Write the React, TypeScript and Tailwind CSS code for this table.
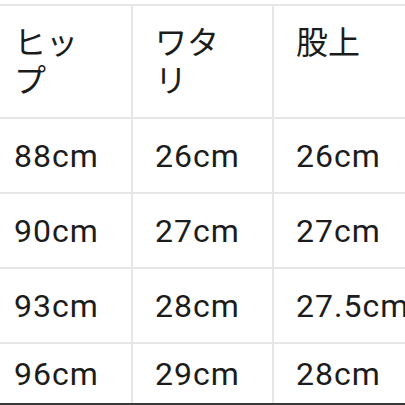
import React from "react";

const rows = [
  ["88cm", "26cm", "26cm"],
  ["90cm", "27cm", "27cm"],
  ["93cm", "28cm", "27.5cm"],
  ["96cm", "29cm", "28cm"],
];

const headers = ["ヒップ", "ワタリ", "股上"];

export default function App() {
  return (
    <div className="w-[405px] h-[405px] overflow-hidden bg-white pt-[4px] flex flex-col text-[#1c1c1c]">
      <div className="ml-[-10px] flex flex-col flex-1 min-h-0 border-t-2 border-[#e6e6e6]">
        {/* Header */}
        <div className="flex h-[113px] shrink-0 border-b-2 border-[#e6e6e6]">
          {headers.map((h) => (
            <div
              key={h}
              className="w-[141px] shrink-0 border-l-2 border-[#e6e6e6] pl-[22px] pt-[15px]"
            >
              <div
                className="w-[92px] text-[32px] leading-[38px]"
                style={{ fontFamily: '"Noto Sans CJK JP", "Noto Sans", sans-serif' }}
              >
                {h}
              </div>
            </div>
          ))}
        </div>

        {/* Rows */}
        {rows.map((r, i) => (
          <div
            key={i}
            className={
              i === rows.length - 1
                ? "flex flex-1 min-h-0"
                : "flex h-[75px] shrink-0 border-b-2 border-[#e6e6e6]"
            }
          >
            {r.map((v, j) => (
              <div
                key={j}
                className="w-[141px] shrink-0 border-l-2 border-[#e6e6e6] pl-[22px] flex items-center whitespace-nowrap overflow-hidden"
              >
                <span
                  className="text-[32px] leading-none tracking-[1px]"
                  style={{ fontFamily: "Roboto, sans-serif" }}
                >
                  {v}
                </span>
              </div>
            ))}
          </div>
        ))}
      </div>
      <div className="h-[2px] shrink-0 bg-[#3a3a3a]" />
    </div>
  );
}
